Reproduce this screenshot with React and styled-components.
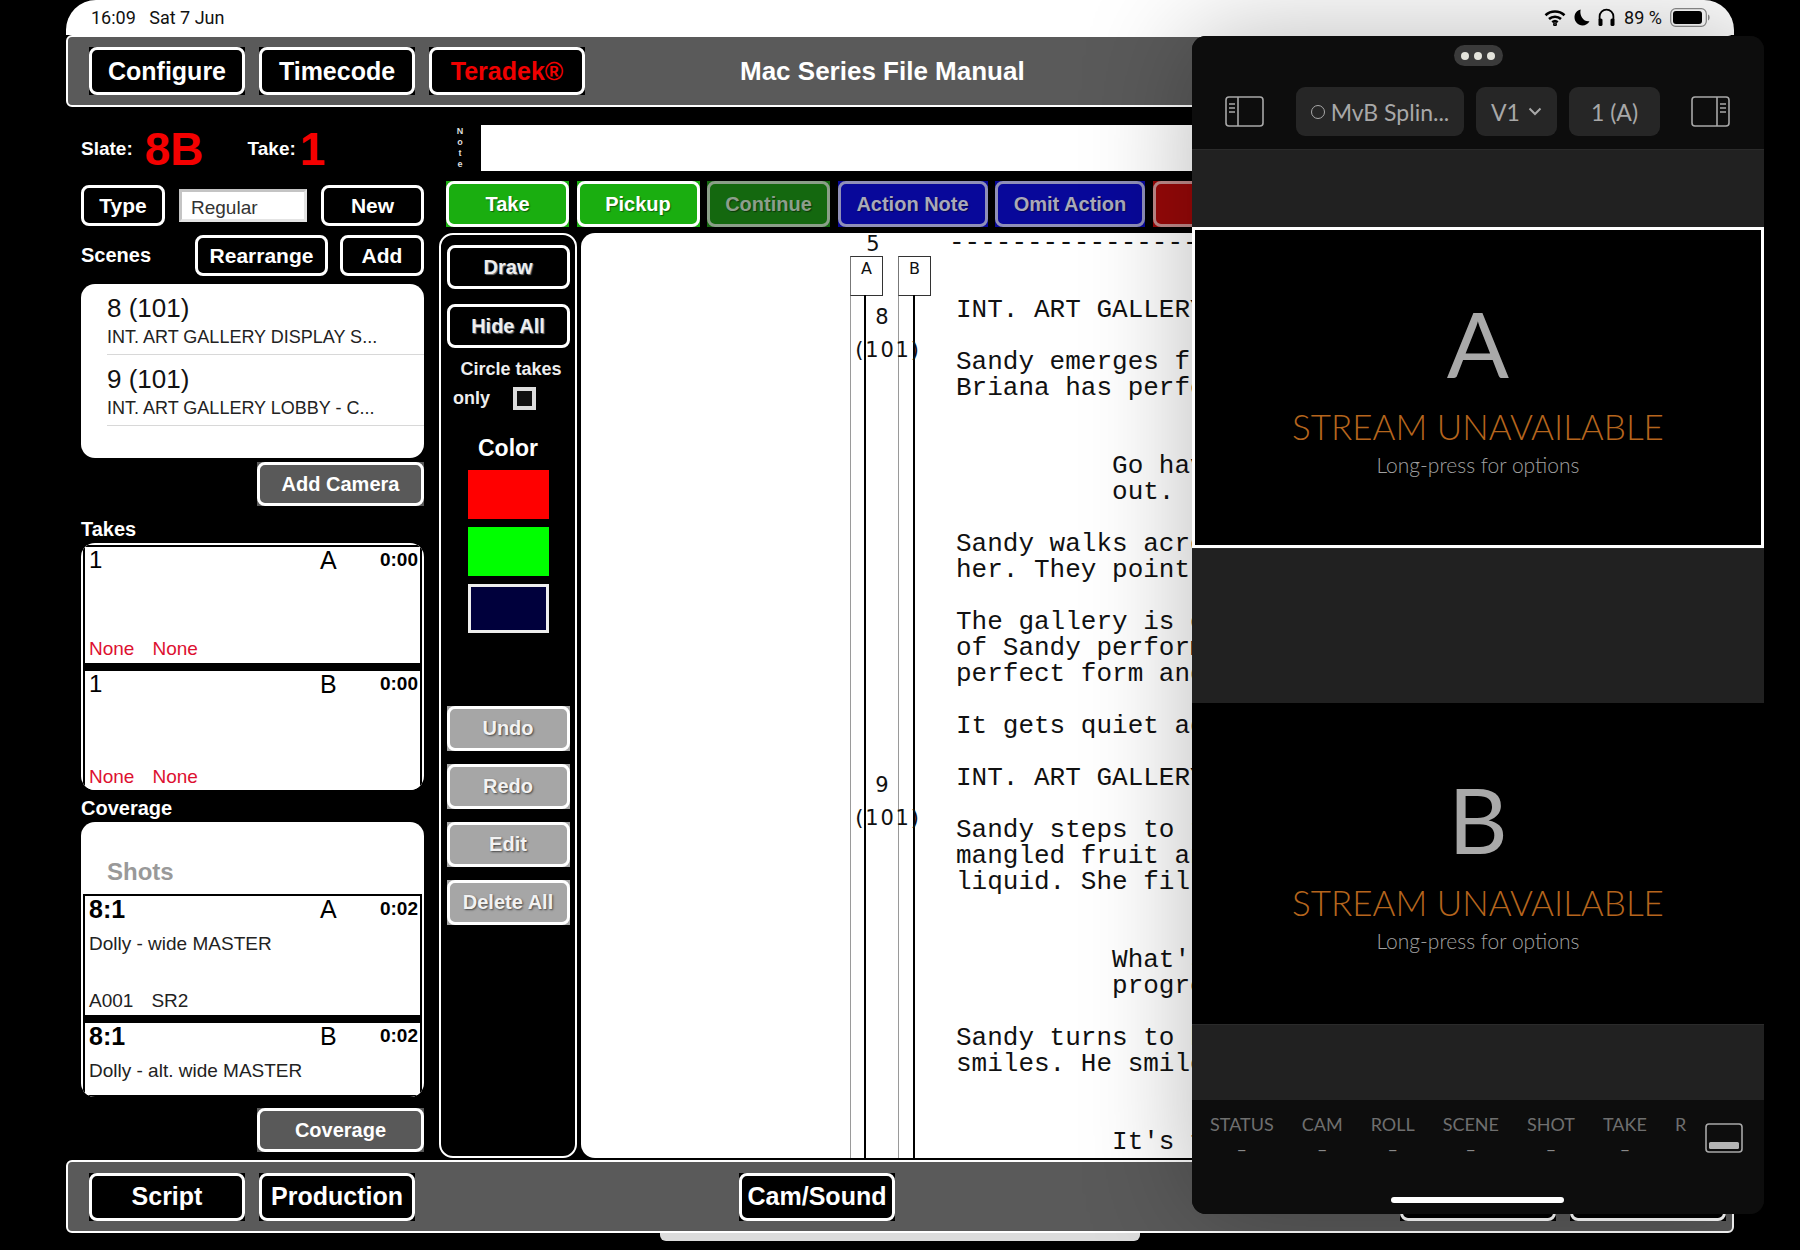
import React from "react";
import styled, { createGlobalStyle } from "styled-components";

const GlobalStyle = createGlobalStyle`
  html, body {
    margin: 0;
    padding: 0;
    background: #000;
  }
  * {
    box-sizing: border-box;
  }
`;

const SANS = `"Liberation Sans", Arial, sans-serif`;
const PANEL_FONT = `Lato, "Noto Sans", sans-serif`;

const scriptLines = [
  "INT. ART GALLERY DISPLAY",
  "",
  "Sandy emerges from the back.",
  "Briana has perfected her art.",
  "",
  "",
  "          Go have a look.",
  "          out.",
  "",
  "Sandy walks across the room to",
  "her. They point at the wall.",
  "",
  "The gallery is empty of people",
  "of Sandy performing in the room",
  "perfect form and",
  "",
  "It gets quiet again.",
  "",
  "INT. ART GALLERY LOBBY",
  "",
  "Sandy steps to the table.",
  "mangled fruit and a glass of",
  "liquid. She fills it up.",
  "",
  "",
  "          What's the",
  "          progress?",
  "",
  "Sandy turns to him and",
  "smiles. He smiles back.",
  "",
  "",
  "          It's fine.",
];

const statusCols = [
  { label: "STATUS", value: "–" },
  { label: "CAM", value: "–" },
  { label: "ROLL", value: "–" },
  { label: "SCENE", value: "–" },
  { label: "SHOT", value: "–" },
  { label: "TAKE", value: "–" },
  { label: "R", value: "" },
];

function SidebarIcon({ flip }) {
  return (
    <svg width="39" height="31" viewBox="0 0 39 31" fill="none" stroke="#a8a8a8" strokeWidth="1.6">
      <g transform={flip ? "translate(39 0) scale(-1 1)" : undefined}>
        <rect x="1" y="1" width="37" height="29" rx="3" />
        <line x1="13" y1="1" x2="13" y2="30" />
        <line x1="4" y1="8" x2="10" y2="8" />
        <line x1="4" y1="12" x2="10" y2="12" />
        <line x1="4" y1="16" x2="10" y2="16" />
      </g>
    </svg>
  );
}

function BottomPanelIcon() {
  return (
    <svg width="38" height="30" viewBox="0 0 38 30" fill="none">
      <rect x="1" y="1" width="36" height="28" rx="3" stroke="#a8a8a8" strokeWidth="1.6" />
      <rect x="4" y="19" width="30" height="7" rx="1.5" fill="#b4b4b4" />
    </svg>
  );
}

function WifiIcon() {
  return (
    <svg width="22" height="17" viewBox="0 0 22 17" fill="none" stroke="#000" strokeWidth="2.6">
      <path d="M1.5 6.2C6.8 1.2 15.2 1.2 20.5 6.2" />
      <path d="M5 10C8.4 6.9 13.6 6.9 17 10" />
      <path d="M8.3 13.2C9.9 11.8 12.1 11.8 13.7 13.2" />
      <circle cx="11" cy="15.2" r="0.7" fill="#000" />
    </svg>
  );
}

function MoonIcon() {
  return (
    <svg width="16" height="17" viewBox="0 0 16 17">
      <path d="M6.6 0.5C3 1.3 0.5 4.5 0.5 8.3c0 4.5 3.6 8.2 8 8.2 3 0 5.7-1.7 7-4.3-5.3 1-10.3-4.6-8.9-11.7z" fill="#000" />
    </svg>
  );
}

function HeadphoneIcon() {
  return (
    <svg width="17" height="19" viewBox="0 0 17 19" fill="none">
      <path d="M1.6 12V8.5a6.9 6.9 0 0 1 13.8 0V12" stroke="#000" strokeWidth="1.8" />
      <rect x="0.5" y="10.5" width="4" height="7.5" rx="1.6" fill="#000" />
      <rect x="12.5" y="10.5" width="4" height="7.5" rx="1.6" fill="#000" />
    </svg>
  );
}

function BatteryIcon() {
  return (
    <svg width="40" height="19" viewBox="0 0 40 19" fill="none">
      <rect x="0.7" y="0.7" width="35.6" height="17.6" rx="5" stroke="#8d8d8d" strokeWidth="1.2" />
      <rect x="3" y="3" width="29" height="13" rx="3" fill="#000" />
      <path d="M38 6.5c1.2.4 1.6 1.6 1.6 3s-.4 2.6-1.6 3z" fill="#8d8d8d" />
    </svg>
  );
}

function TakeRow({ name, cam, time, bottom, bottomRed, note, height, bold }) {
  return (
    <Row $height={height}>
      <RowTop>
        <RowName $bold={bold}>{name}</RowName>
        <RowCam>{cam}</RowCam>
        <RowTime>{time}</RowTime>
      </RowTop>
      {note && <RowNote>{note}</RowNote>}
      {bottom && (
        <RowBottom $red={bottomRed}>
          <span>{bottom[0]}</span>
          <span>{bottom[1]}</span>
        </RowBottom>
      )}
    </Row>
  );
}

function Lens({ letter }) {
  return (
    <LensBlock>
      <LensLetter>{letter}</LensLetter>
      <LensTitle>STREAM UNAVAILABLE</LensTitle>
      <LensHint>Long-press for options</LensHint>
    </LensBlock>
  );
}

export default function App() {
  return (
    <>
      <GlobalStyle />
      <Screen>
        <Device>
          <StatusBar>
            <StatusTime>16:09&nbsp;&nbsp; Sat 7 Jun</StatusTime>
            <StatusRight>
              <WifiIcon />
              <MoonIcon />
              <HeadphoneIcon />
              <BatteryText>89 %</BatteryText>
              <BatteryIcon />
            </StatusRight>
          </StatusBar>

          <NavBar>
            <NavButton>Configure</NavButton>
            <NavButton>Timecode</NavButton>
            <NavButton $color="#f00000">Teradek®</NavButton>
            <Title>Mac Series File Manual</Title>
          </NavBar>

          <Body>
            <LeftColumn>
              <SlateRow>
                <SlateLabel>Slate:</SlateLabel>
                <SlateValue>8B</SlateValue>
                <SlateLabel $left="44px">Take:</SlateLabel>
                <SlateValue $left="4px">1</SlateValue>
              </SlateRow>
              <TypeRow>
                <SmallButton $width="84px">Type</SmallButton>
                <TypeField>Regular</TypeField>
                <SmallButton $width="103px">New</SmallButton>
              </TypeRow>
              <ScenesRow>
                <SectionLabel>Scenes</SectionLabel>
                <SmallButton $width="133px" $left="auto">Rearrange</SmallButton>
                <SmallButton $width="84px" $left="12px">Add</SmallButton>
              </ScenesRow>
              <SceneList>
                <SceneItem>
                  <SceneNumber>8 (101)</SceneNumber>
                  <SceneSub>INT. ART GALLERY DISPLAY S...</SceneSub>
                </SceneItem>
                <SceneItem>
                  <SceneNumber>9 (101)</SceneNumber>
                  <SceneSub>INT. ART GALLERY LOBBY - C...</SceneSub>
                </SceneItem>
              </SceneList>
              <GreyButton>Add Camera</GreyButton>
              <TakesLabel>Takes</TakesLabel>
              <CardList $height="247px">
                <TakeRow name="1" cam="A" time="0:00" bottom={["None", "None"]} bottomRed height="124px" />
                <TakeRow name="1" cam="B" time="0:00" bottom={["None", "None"]} bottomRed height="124px" />
              </CardList>
              <CoverageLabel>Coverage</CoverageLabel>
              <CardList $height="275px">
                <ShotsHeader>Shots</ShotsHeader>
                <TakeRow
                  name="8:1"
                  bold
                  cam="A"
                  time="0:02"
                  note="Dolly - wide MASTER"
                  bottom={["A001", "SR2"]}
                  height="127px"
                />
                <TakeRow
                  name="8:1"
                  bold
                  cam="B"
                  time="0:02"
                  note="Dolly - alt. wide MASTER"
                  height="76px"
                />
              </CardList>
              <GreyButton $top="11px">Coverage</GreyButton>
            </LeftColumn>

            <RightColumn>
              <NoteRow>
                <NoteLabel>
                  <span>N</span>
                  <span>o</span>
                  <span>t</span>
                  <span>e</span>
                </NoteLabel>
                <NoteField />
              </NoteRow>
              <ActionRow>
                <ActionButton $bg="#1aae10" $border="#fff" $color="#fff" $width="123px">Take</ActionButton>
                <ActionButton $bg="#1aae10" $border="#fff" $color="#fff" $width="123px">Pickup</ActionButton>
                <ActionButton $bg="#14680f" $border="#8a9f88" $color="#8d9e8c" $width="123px">Continue</ActionButton>
                <ActionButton $bg="#08089a" $border="#8f8fb8" $color="#a9a9b8" $width="150px">Action Note</ActionButton>
                <ActionButton $bg="#08089a" $border="#8f8fb8" $color="#a9a9b8" $width="150px">Omit Action</ActionButton>
                <ActionButton $bg="#980808" $border="#c08a8a" $color="#c9a9a9" $width="150px">Delete</ActionButton>
              </ActionRow>
              <WorkArea>
                <ToolColumn>
                  <ToolButton>Draw</ToolButton>
                  <ToolButton $top="15px">Hide All</ToolButton>
                  <CircleLabel>Circle takes</CircleLabel>
                  <OnlyRow>
                    <span>only</span>
                    <CheckBox />
                  </OnlyRow>
                  <ColorLabel>Color</ColorLabel>
                  <Swatch $bg="#ff0000" />
                  <Swatch $bg="#00ff00" />
                  <Swatch $bg="#00003c" $outlined />
                  <DimButton $top="73px">Undo</DimButton>
                  <DimButton>Redo</DimButton>
                  <DimButton>Edit</DimButton>
                  <DimButton>Delete All</DimButton>
                </ToolColumn>

                <ScriptPage>
                  <PageNumber>5</PageNumber>
                  <LineTrack $left="269px" $dark="283px">
                    <TrackBox>A</TrackBox>
                  </LineTrack>
                  <LineTrack $left="317px" $dark="332px">
                    <TrackBox>B</TrackBox>
                  </LineTrack>
                  <SceneMark $top="68px">
                    <b>8</b>
                    <span>(101)</span>
                  </SceneMark>
                  <SceneMark $top="536px">
                    <b>9</b>
                    <span>(101)</span>
                  </SceneMark>
                  <DashLine>--------------------------------</DashLine>
                  <ScriptText>
                    {scriptLines.map((line, i) => (
                      <ScriptLine key={i}>{line || " "}</ScriptLine>
                    ))}
                  </ScriptText>
                </ScriptPage>
              </WorkArea>
            </RightColumn>
          </Body>

          <BottomBar>
            <NavButton>Script</NavButton>
            <NavButton>Production</NavButton>
            <NavButton $left="310px">Cam/Sound</NavButton>
            <NavButton $left="491px">Reports</NavButton>
            <NavButton>Settings</NavButton>
          </BottomBar>
          <HomeBar />
        </Device>

        <Panel>
          <PanelHeader>
            <Grip>
              <i />
              <i />
              <i />
            </Grip>
            <PanelToolbar>
              <SidebarIcon />
              <PanelPill $left="32px" $width="168px">
                <RecDot />
                MvB Splin...
              </PanelPill>
              <PanelPill $left="12px" $width="81px">
                V1
                <svg width="14" height="9" viewBox="0 0 14 9" fill="none" stroke="#a8a8a8" strokeWidth="2">
                  <path d="M1.5 1.5L7 7l5.5-5.5" />
                </svg>
              </PanelPill>
              <PanelPill $left="12px" $width="91px">1 (A)</PanelPill>
              <IconSlot>
                <SidebarIcon flip />
              </IconSlot>
            </PanelToolbar>
          </PanelHeader>
          <Gutter $height="78px" />
          <LensFrame $selected>
            <Lens letter="A" />
          </LensFrame>
          <Gutter $height="155px" />
          <LensFrame>
            <Lens letter="B" />
          </LensFrame>
          <Gutter $height="76px" />
          <PanelFooter>
            {statusCols.map((col) => (
              <StatusCol key={col.label}>
                <StatusName>{col.label}</StatusName>
                <StatusValue>{col.value}</StatusValue>
              </StatusCol>
            ))}
            <FooterIcon>
              <BottomPanelIcon />
            </FooterIcon>
            <HomeIndicator />
          </PanelFooter>
        </Panel>
      </Screen>
    </>
  );
}

const Screen = styled.div`
  position: relative;
  width: 1800px;
  height: 1250px;
  background: #000;
  overflow: hidden;
  font-family: ${SANS};
`;

const Device = styled.div`
  width: 1668px;
  margin-left: 66px;
  display: flex;
  flex-direction: column;
`;

const StatusBar = styled.div`
  height: 35px;
  background: #fff;
  border-radius: 30px 30px 0 0;
  display: flex;
  align-items: center;
  justify-content: space-between;
  padding: 0 24px 0 25px;
  color: #111;
  font-family: Roboto, sans-serif;
  font-size: 18px;
`;

const StatusTime = styled.div`
  white-space: pre;
`;

const StatusRight = styled.div`
  display: flex;
  align-items: center;
  gap: 8px;
`;

const BatteryText = styled.span`
  margin: 0 0 0 1px;
`;

const Bar = styled.div`
  background: #5a5a5a;
  border: 2px solid #fff;
  border-radius: 6px;
  display: flex;
  align-items: center;
  padding-left: 21px;
  gap: 14px;
`;

const NavBar = styled(Bar)`
  height: 72px;
`;

const BottomBar = styled(Bar)`
  height: 73px;
`;

const SquareButton = styled.div`
  position: relative;
  display: flex;
  align-items: center;
  justify-content: center;
  font-weight: 700;
  white-space: nowrap;

  &::after {
    content: "";
    position: absolute;
    inset: 0;
    border-radius: 8px;
    border: 3px solid ${(props) => props.$border || "#fff"};
  }
`;

const NavButton = styled(SquareButton)`
  width: 156px;
  height: 48px;
  flex-shrink: 0;
  background: #000;
  color: ${(props) => props.$color || "#fff"};
  font-size: 25px;
  margin-left: ${(props) => props.$left || 0};
`;

const Title = styled.div`
  margin-left: 141px;
  color: #fff;
  font-size: 26px;
  font-weight: 700;
  white-space: nowrap;
`;

const Body = styled.div`
  height: 1053px;
  display: flex;
  padding-left: 15px;
  gap: 15px;
`;

const LeftColumn = styled.div`
  width: 343px;
  flex-shrink: 0;
  display: flex;
  flex-direction: column;
  padding-top: 18px;
`;

const SlateRow = styled.div`
  height: 48px;
  display: flex;
  align-items: center;
`;

const SlateLabel = styled.span`
  color: #fff;
  font-size: 19px;
  font-weight: 700;
  margin-left: ${(props) => props.$left || 0};
`;

const SlateValue = styled.span`
  color: #f40000;
  font-size: 46px;
  font-weight: 700;
  margin-left: ${(props) => props.$left || "12px"};
`;

const TypeRow = styled.div`
  margin-top: 12px;
  display: flex;
  justify-content: space-between;
  align-items: center;
`;

const SmallButton = styled(SquareButton)`
  width: ${(props) => props.$width};
  height: 41px;
  background: #000;
  color: #fff;
  font-size: 21px;
  margin-left: ${(props) => props.$left || 0};
`;

const TypeField = styled.div`
  width: 128px;
  height: 33px;
  background: #fff;
  border: 3px solid #c4c4c4;
  border-bottom-color: #e4e4e4;
  border-right-color: #e4e4e4;
  color: #333;
  font-size: 19px;
  line-height: 31px;
  padding-left: 9px;
`;

const ScenesRow = styled.div`
  margin-top: 9px;
  display: flex;
  align-items: center;
`;

const SectionLabel = styled.span`
  color: #fff;
  font-size: 20px;
  font-weight: 700;
`;

const SceneList = styled.div`
  margin-top: 8px;
  height: 174px;
  background: #fff;
  border-radius: 14px;
  padding-left: 26px;
`;

const SceneItem = styled.div`
  height: 71px;
  border-bottom: 1px solid #d8d8d8;
  padding-top: 9px;
`;

const SceneNumber = styled.div`
  font-size: 26px;
  line-height: 30px;
  color: #111;
`;

const SceneSub = styled.div`
  font-size: 18px;
  line-height: 24px;
  margin-top: 2px;
  color: #222;
`;

const GreyButton = styled(SquareButton)`
  align-self: flex-end;
  width: 167px;
  height: 44px;
  flex-shrink: 0;
  margin-top: ${(props) => props.$top || "4px"};
  background: #595959;
  color: #fff;
  font-size: 20px;
`;

const TakesLabel = styled(SectionLabel)`
  margin-top: 12px;
  line-height: 22px;
  height: 22px;
`;

const CoverageLabel = styled(SectionLabel)`
  margin-top: 7px;
  line-height: 22px;
  height: 22px;
`;

const CardList = styled.div`
  margin-top: 3px;
  height: ${(props) => props.$height};
  flex-shrink: 0;
  background: #fff;
  border-radius: 14px;
  padding: 2px 2px 0;
  overflow: hidden;
`;

const Row = styled.div`
  height: ${(props) => props.$height};
  border: 2px solid #000;
  border-bottom-width: 6px;
  padding: 0 2px 0 4px;
  background: #fff;
  display: flex;
  flex-direction: column;
  flex-shrink: 0;
  margin-bottom: 0;

  &:last-child {
    border-bottom-width: 2px;
  }
`;

const RowTop = styled.div`
  display: flex;
  align-items: center;
  height: 26px;
  color: #000;
`;

const RowName = styled.span`
  font-size: ${(props) => (props.$bold ? "25px" : "24px")};
  font-weight: ${(props) => (props.$bold ? 700 : 400)};
`;

const RowCam = styled.span`
  margin-left: auto;
  width: 23px;
  margin-right: 37px;
  font-size: 25px;
`;

const RowTime = styled.span`
  font-size: 19px;
  font-weight: 700;
`;

const RowNote = styled.div`
  margin-top: 10px;
  color: #222;
  font-size: 19px;
  line-height: 24px;
`;

const RowBottom = styled.div`
  margin-top: auto;
  margin-bottom: 2px;
  display: flex;
  gap: 18px;
  font-size: 19px;
  line-height: 24px;
  color: ${(props) => (props.$red ? "#dd1030" : "#222")};
`;

const ShotsHeader = styled.div`
  height: 70px;
  padding: 33px 0 0 24px;
  color: #999;
  font-size: 24px;
  line-height: 30px;
  font-weight: 700;
`;

const RightColumn = styled.div`
  flex: 1;
  min-width: 0;
  display: flex;
  flex-direction: column;
  padding-top: 18px;
`;

const NoteRow = styled.div`
  height: 46px;
  display: flex;
`;

const NoteLabel = styled.div`
  width: 42px;
  display: flex;
  flex-direction: column;
  align-items: center;
  justify-content: center;
  color: #ddd;
  font-size: 9px;
  line-height: 11px;
  font-weight: 700;
`;

const NoteField = styled.div`
  flex: 1;
  background: #fff;
`;

const ActionRow = styled.div`
  margin-top: 10px;
  height: 46px;
  padding-left: 7px;
  display: flex;
  gap: 7.5px;
`;

const ActionButton = styled(SquareButton)`
  width: ${(props) => props.$width};
  flex-shrink: 0;
  background: ${(props) => props.$bg};
  color: ${(props) => props.$color};
  font-size: 20px;
  text-shadow: 1px 1px 1px rgba(0, 0, 0, 0.45);
`;

const WorkArea = styled.div`
  margin-top: 6px;
  flex: 1;
  display: flex;
  gap: 4px;
  padding-bottom: 2px;
`;

const ToolColumn = styled.div`
  width: 138px;
  flex-shrink: 0;
  border: 2px solid #fff;
  border-radius: 14px;
  background: #000;
  padding-top: 10px;
  display: flex;
  flex-direction: column;
  align-items: center;
`;

const ToolButton = styled(SquareButton)`
  width: 123px;
  height: 44px;
  margin-top: ${(props) => props.$top || 0};
  background: #000;
  color: #eee;
  font-size: 20px;
  text-shadow: 1px 1px 1px #777;
  flex-shrink: 0;
`;

const CircleLabel = styled.div`
  margin: 10px 0 0 6px;
  color: #eee;
  font-size: 18px;
  font-weight: 700;
  line-height: 22px;
`;

const OnlyRow = styled.div`
  align-self: flex-start;
  margin: 6px 0 0 12px;
  height: 24px;
  color: #eee;
  font-size: 18px;
  font-weight: 700;
  display: flex;
  align-items: center;
  gap: 23px;
`;

const CheckBox = styled.div`
  width: 23px;
  height: 23px;
  border: 4px solid #ddd;
  background: #111;
`;

const ColorLabel = styled.div`
  margin-top: 24px;
  color: #fff;
  font-size: 23px;
  font-weight: 700;
  line-height: 28px;
`;

const Swatch = styled.div`
  width: 81px;
  height: 49px;
  margin-top: ${(props) => (props.$outlined ? "8px" : "8px")};
  flex-shrink: 0;
  background: ${(props) => props.$bg};
  border: ${(props) => (props.$outlined ? "3px solid #eee" : "none")};
`;

const DimButton = styled(SquareButton)`
  width: 123px;
  height: 45px;
  margin-top: ${(props) => props.$top || "13px"};
  background: #a6a6a6;
  color: #f2f2f2;
  font-size: 20px;
  text-shadow: 1px 1px 2px #444;
  flex-shrink: 0;
`;

const ScriptPage = styled.div`
  position: relative;
  flex: 1;
  min-width: 0;
  background: #fff;
  border-radius: 14px 0 0 14px;
  overflow: hidden;
`;

const PageNumber = styled.div`
  position: absolute;
  top: -2px;
  left: 280px;
  width: 24px;
  text-align: center;
  font-family: "DejaVu Sans", sans-serif;
  font-size: 21px;
  line-height: 26px;
  color: #111;
`;

const LineTrack = styled.div`
  position: absolute;
  top: 23px;
  bottom: 0;
  left: ${(props) => props.$left};
  width: 1px;
  background: #9a9a9a;

  &::after {
    content: "";
    position: absolute;
    top: 39px;
    bottom: 0;
    left: calc(${(props) => props.$dark} - ${(props) => props.$left});
    width: 2px;
    background: #000;
  }
`;

const TrackBox = styled.div`
  position: absolute;
  top: 0;
  left: 0;
  width: 33px;
  height: 40px;
  background: #fff;
  border: 1px solid #333;
  border-left-color: #777;
  font-family: "DejaVu Sans", sans-serif;
  font-size: 16px;
  line-height: 24px;
  padding-left: 10px;
  color: #111;
`;

const SceneMark = styled.div`
  position: absolute;
  top: ${(props) => props.$top};
  left: 271px;
  width: 72px;
  display: flex;
  flex-direction: column;
  align-items: center;
  font-family: "DejaVu Sans", sans-serif;
  font-size: 21px;
  line-height: 33px;
  color: #111;

  b {
    font-weight: 400;
    margin-left: -12px;
  }

  span {
    letter-spacing: 1.8px;
    white-space: nowrap;
  }
`;

const DashLine = styled.div`
  position: absolute;
  top: -3px;
  left: 368px;
  font-family: "Liberation Mono", monospace;
  font-size: 26px;
  line-height: 26px;
  color: #111;
  white-space: pre;
`;

const ScriptText = styled.div`
  padding: 64px 0 0 375px;
  font-family: "Liberation Mono", monospace;
  font-size: 26px;
  line-height: 26px;
  color: #111;
`;

const ScriptLine = styled.div`
  white-space: pre;
  height: 26px;
`;

const HomeBar = styled.div`
  width: 480px;
  height: 8px;
  margin: 0 0 0 594px;
  background: #dcdcdc;
  border-radius: 0 0 6px 6px;
`;

/* the floating slide-over window */
const Panel = styled.div`
  position: absolute;
  left: 1192px;
  top: 36px;
  width: 572px;
  height: 1178px;
  background: #0d0d0d;
  border-radius: 14px;
  overflow: hidden;
  display: flex;
  flex-direction: column;
  box-shadow: 0 0 110px rgba(0, 0, 0, 0.28);
  font-family: ${PANEL_FONT};
`;

const PanelHeader = styled.div`
  height: 113px;
  flex-shrink: 0;
  display: flex;
  flex-direction: column;
  align-items: center;
  padding-top: 9px;
  background: #0d0d0d;
`;

const Grip = styled.div`
  width: 49px;
  height: 21px;
  border-radius: 11px;
  background: #3a3a3a;
  display: flex;
  align-items: center;
  justify-content: center;
  gap: 5px;

  i {
    width: 8px;
    height: 8px;
    border-radius: 50%;
    background: #e4e4dc;
  }
`;

const PanelToolbar = styled.div`
  align-self: stretch;
  margin-top: 21px;
  padding-left: 33px;
  display: flex;
  align-items: center;
`;

const PanelPill = styled.div`
  width: ${(props) => props.$width};
  height: 49px;
  margin-left: ${(props) => props.$left};
  border-radius: 9px;
  background: #262626;
  color: #a8a8a8;
  font-size: 23px;
  display: flex;
  align-items: center;
  justify-content: center;
  gap: 8px;
  white-space: nowrap;
`;

const RecDot = styled.span`
  width: 14px;
  height: 14px;
  border: 1.5px solid #a8a8a8;
  border-radius: 50%;
  margin-right: -2px;
`;

const IconSlot = styled.div`
  margin-left: 31px;
  display: flex;
`;

const Gutter = styled.div`
  height: ${(props) => props.$height};
  flex-shrink: 0;
  background: #212121;
  border-top: 1px solid #2b2b2b;
`;

const LensFrame = styled.div`
  height: 321px;
  flex-shrink: 0;
  background: #000;
  border: ${(props) => (props.$selected ? "3px solid #fff" : "none")};
  display: flex;
  align-items: center;
  justify-content: center;
`;

const LensBlock = styled.div`
  display: flex;
  flex-direction: column;
  align-items: center;
`;

const LensLetter = styled.div`
  color: #a9a9a9;
  font-size: 92px;
  line-height: 92px;
`;

const LensTitle = styled.div`
  margin-top: 16px;
  color: #b5651d;
  font-size: 35px;
  font-weight: 300;
  line-height: 42px;
  white-space: nowrap;
`;

const LensHint = styled.div`
  margin-top: 4px;
  color: #a0a0a0;
  font-size: 21px;
  font-weight: 300;
  line-height: 28px;
`;

const PanelFooter = styled.div`
  position: relative;
  flex: 1;
  display: flex;
  gap: 28px;
  padding: 12px 0 0 18px;
  background: #0d0d0d;
`;

const StatusCol = styled.div`
  display: flex;
  flex-direction: column;
  align-items: center;
`;

const StatusName = styled.div`
  color: #6f6f6f;
  font-size: 18px;
  line-height: 24px;
`;

const StatusValue = styled.div`
  color: #8a8a8a;
  font-size: 18px;
  line-height: 26px;
  height: 26px;
`;

const FooterIcon = styled.div`
  position: absolute;
  right: 21px;
  top: 23px;
  display: flex;
`;

const HomeIndicator = styled.div`
  position: absolute;
  left: 199px;
  bottom: 11px;
  width: 173px;
  height: 6px;
  border-radius: 3px;
  background: #fff;
`;
